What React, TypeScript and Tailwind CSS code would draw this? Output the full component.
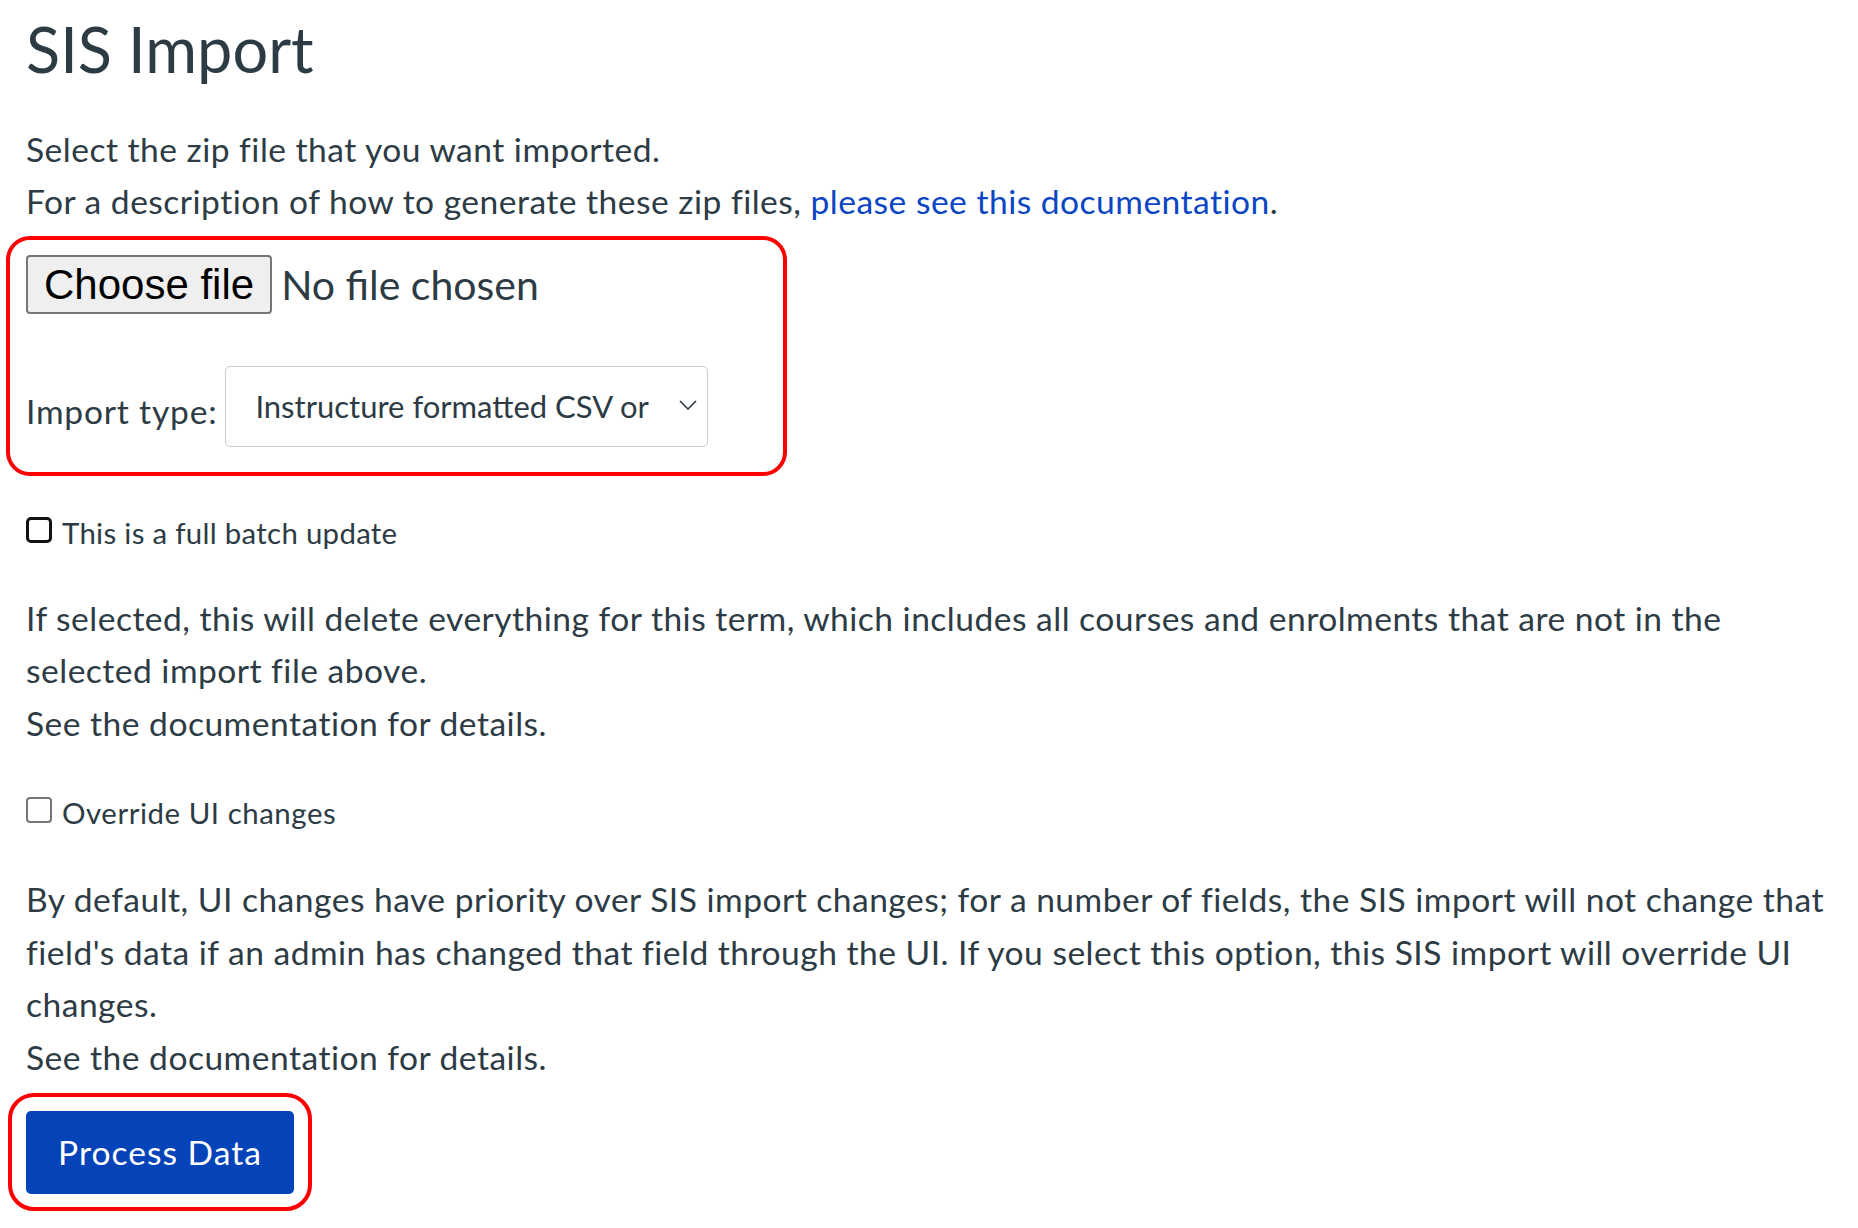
import React from "react";

export default function App() {
  return (
    <div className="min-h-screen bg-white pl-[26px] pr-[26px] text-[#2d3b45] font-['Lato',sans-serif]">
      <h1 className="pt-[11px] text-[63px] leading-[75.6px] font-normal">SIS Import</h1>

      <div className="mt-[36px] text-[33.6px] leading-[52.5px] tracking-[0.48px]">
        <div>Select the zip file that you want imported.</div>
        <div>
          For a description of how to generate these zip files,{" "}
          <a className="text-[#0a45c3]">please see this documentation</a>.
        </div>
      </div>

      <div className="relative mt-[27px] w-fit">
        <div className="pointer-events-none absolute left-[-20px] top-[-19px] h-[240px] w-[781px] rounded-[24px] border-4 border-[#ff0000]" />
        <div className="flex items-center">
          <span className="flex h-[59px] items-center rounded-[4px] border-2 border-[#767676] bg-[#efefef] px-[16px] text-[42px] text-black font-['Liberation_Sans',Arial,sans-serif]">
            Choose file
          </span>
          <span className="ml-[9px] text-[41px] leading-[59px]">No file chosen</span>
        </div>
        <div className="mt-[52px] flex items-end">
          <label className="mb-[9px] text-[33.6px] leading-[52.5px] tracking-[0.8px]">Import type:</label>
          <div className="ml-[8px] flex h-[81px] w-[483px] items-center justify-between rounded-[5px] border border-[#c7cdd1] bg-white pl-[29px] pr-[10px]">
            <span className="text-[31px] leading-[40px]">Instructure formatted CSV or</span>
            <svg width="18" height="10" viewBox="0 0 18 10" fill="none" className="mb-[2px]">
              <polyline points="1,1 9,9 17,1" stroke="#2d3b45" strokeWidth="1.6" fill="none" />
            </svg>
          </div>
        </div>
      </div>

      <div className="mt-[64px] flex items-start text-[29.4px] leading-[44px]">
        <span className="mt-[6px] box-border h-[26px] w-[26px] shrink-0 rounded-[5px] border-[3px] border-[#111111] bg-white" />
        <span className="ml-[10px] tracking-[0.3px]">This is a full batch update</span>
      </div>

      <div className="mt-[37px] text-[33.6px] leading-[52.5px] tracking-[0.48px]">
        <div>
          If selected, this will delete everything for this term, which includes all courses and enrolments that are not in the selected import file above.
        </div>
        <div>See the documentation for details.</div>
      </div>

      <div className="mt-[42px] flex items-start text-[29.4px] leading-[44px]">
        <span className="mt-[6px] box-border h-[26px] w-[26px] shrink-0 rounded-[4px] border-2 border-[#767676] bg-white" />
        <span className="ml-[10px] tracking-[0.55px]">Override UI changes</span>
      </div>

      <div className="mt-[38px] text-[33.6px] leading-[52.5px] tracking-[0.48px]">
        <div>
          By default, UI changes have priority over SIS import changes; for a number of fields, the SIS import will not change that field's data if an admin has changed that field through the UI. If you select this option, this SIS import will override UI changes.
        </div>
        <div>See the documentation for details.</div>
      </div>

      <div className="relative mt-[28px] w-fit">
        <div className="pointer-events-none absolute left-[-18px] top-[-18px] h-[118px] w-[304px] rounded-[26px] border-4 border-[#ff0000]" />
        <button className="flex h-[83px] w-[268px] items-center justify-center rounded-[5px] bg-[#0443b8] text-[33.6px] tracking-[1px] text-white">
          Process Data
        </button>
      </div>
    </div>
  );
}
